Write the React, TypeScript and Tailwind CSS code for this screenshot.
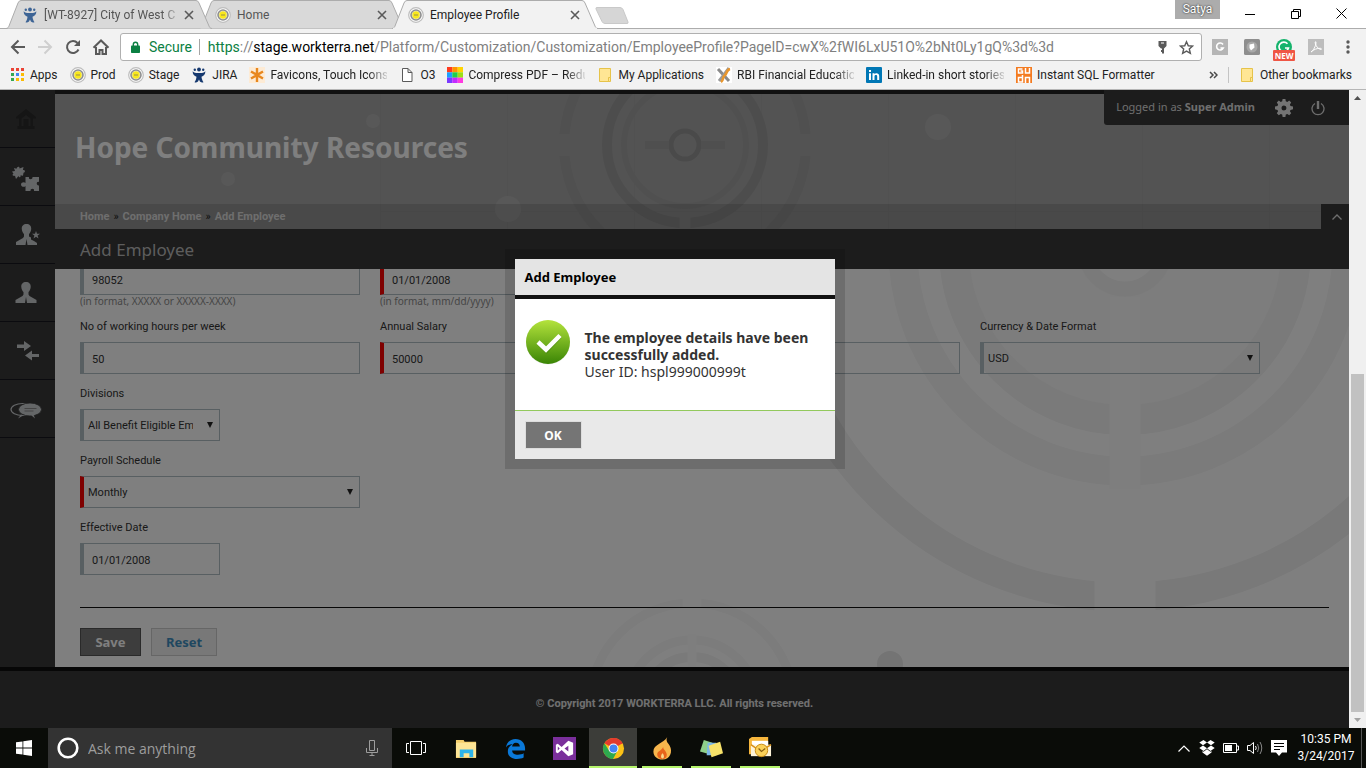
import React from "react";

/* ---------- small drawings ---------- */

function Roundel() {
  return (
    <svg viewBox="0 0 16 16" className="size-4 shrink-0">
      <circle cx="8" cy="8" r="7.3" fill="#fff" stroke="#bdbdbd" strokeWidth="1.200" />
      <circle cx="8" cy="8" r="5" fill="#e9e9e9" stroke="#8f8f8f" strokeWidth="1.600" />
      <circle cx="8" cy="8" r="3.700" fill="#f8e71c" />
      <path d="M6 8h4" stroke="#b3a640" strokeWidth="1.400" />
    </svg>
  );
}

function JiraIcon({ color }: { color: string }) {
  return (
    <svg viewBox="0 0 16 16" className="size-4 shrink-0" fill={color}>
      <circle cx="8" cy="2.500" r="1.900" />
      <circle cx="3.800" cy="2.800" r="1.200" />
      <circle cx="12.200" cy="2.800" r="1.200" />
      <path d="M1.600 4.200C4 6.500 6 6 8 6s4 .5 6.400-1.800C14.300 7.500 12.500 9 10.500 9.800c.2 2 .8 3.800 2 5.400-1.800.4-3 .2-3.600-.6L8 12.500l-1 2.100c-.5.8-1.800 1-3.500.6 1.200-1.400 1.800-3.400 2-5.400C3.500 9 1.700 7.500 1.600 4.200z" />
    </svg>
  );
}

function AppsIcon() {
  const c = ["#ea4335", "#ea4335", "#ea4335", "#34a853", "#4285f4", "#fbbc05", "#34a853", "#fbbc05", "#fbbc05"];
  return (
    <svg viewBox="0 0 16 16" className="size-4 shrink-0">
      {c.map((f, i) => (
        <rect key={i} x={2 + (i % 3) * 5} y={1 + Math.floor(i / 3) * 5} width="3" height="3" fill={f} />
      ))}
    </svg>
  );
}

function StarburstIcon() {
  return (
    <svg viewBox="0 0 16 16" className="size-4 shrink-0">
      <rect width="16" height="16" fill="#fdebd5" />
      <path d="M8 1v14M2 4.500l12 7M14 4.500l-12 7" stroke="#e8871e" strokeWidth="2.400" />
    </svg>
  );
}

function PageIcon() {
  return (
    <svg viewBox="0 0 16 16" className="size-4 shrink-0">
      <path d="M3.500 1.500h5.500l4 4v9h-9.500zM9 1.500v4h4" fill="#fff" stroke="#5a5a5a" />
    </svg>
  );
}

function RainbowIcon() {
  const c = ["#ff3b1f", "#ff9500", "#ffd400", "#19a0ff", "#1fd04a", "#9be015", "#7b3bff", "#c22bff", "#ff3be0"];
  return (
    <svg viewBox="0 0 16 16" className="size-4 shrink-0">
      {c.map((f, i) => (
        <rect key={i} x={(i % 3) * 5.33} y={Math.floor(i / 3) * 5.33} width="5.400" height="5.400" fill={f} />
      ))}
    </svg>
  );
}

function FolderIcon() {
  return (
    <svg viewBox="0 0 16 16" className="size-4 shrink-0">
      <path d="M2.500 1.500h11v11h-1v2h-10z" fill="#ffe694" stroke="#e6c34a" />
      <path d="M11.500 10.500h2v4h-2z" fill="#ffe694" stroke="#e6c34a" />
    </svg>
  );
}

function ToolsIcon() {
  return (
    <svg viewBox="0 0 16 16" className="size-4 shrink-0">
      <rect width="16" height="16" fill="#fff" />
      <path d="M2 2l11 12" stroke="#8a8a8a" strokeWidth="3" />
      <path d="M13 1L7 9l-4 5" stroke="#9a9a9a" strokeWidth="3" />
      <path d="M14 2c-4 1-3 5-5 6-3 2-1 5-4 7" fill="none" stroke="#e8962e" strokeWidth="2.600" />
    </svg>
  );
}

function LinkedInIcon() {
  return (
    <svg viewBox="0 0 16 16" className="size-4 shrink-0">
      <rect width="16" height="16" rx="1" fill="#0077b5" />
      <path d="M3 6.200h2V13H3zM3 3h2v2H3zM6.500 6.200h2v1c1-1.600 4.700-1.700 4.700 1.800v4h-2V9.500c0-2-2.700-1.800-2.700 0V13h-2z" fill="#fff" />
    </svg>
  );
}

function SqlIcon() {
  return (
    <svg viewBox="0 0 16 16" className="size-4 shrink-0" fill="none" stroke="#fff" strokeWidth="1.500">
      <rect width="16" height="16" fill="#f47b20" stroke="none" />
      <path d="M6.500 2h-4v4h4V4h-2M9.500 1v5h4V1M6.500 8v7h-4v-4.500h4M9.500 16v-5.500h4V16" />
    </svg>
  );
}

/* ---------- browser chrome ---------- */

function Tab({ title, icon, active, faded, stack }: { title: string; icon: React.ReactNode; active?: boolean; faded?: boolean; stack: string }) {
  return (
    <div className={`relative flex h-[29px] w-[206px] shrink-0 items-center gap-[6px] pr-[18px] pl-4 ${stack}`}>
      <svg viewBox="0 0 206 29" className="absolute inset-0 size-full" preserveAspectRatio="none">
        <path
          d="M0 28.500C2 28.500 2.500 27 3 26L12 3Q13 .5 15 .5H190Q192 .5 193 3L203 26C203.500 27 204 28.500 206 28.500"
          fill={active ? "#f2f2f2" : "#d9d9d9"}
          stroke="#acacac"
        />
        {active && <path d="M1 28.500H205" stroke="#f2f2f2" strokeWidth="1.500" />}
      </svg>
      <span className="relative">{icon}</span>
      <button
        className={`relative flex-1 text-left whitespace-nowrap ${active ? "text-[#222]" : "text-[#555]"} ${faded ? "[mask-image:linear-gradient(to_right,#000_118px,transparent_138px)]" : ""}`}
      >
        {title}
      </button>
      <button aria-label={`Close ${title}`} className="relative">
        <svg viewBox="0 0 10 10" className="size-[10px]" stroke="#5a5a5a" strokeWidth="1.600">
          <path d="M1 1l8 8M9 1l-8 8" />
        </svg>
      </button>
    </div>
  );
}

function TabStrip() {
  return (
    <div className="flex h-[29px] shrink-0 justify-between border-b border-[#acacac] bg-white pl-[6px] text-[12px]">
      <div className="flex">
        <Tab title="[WT-8927] City of West C" icon={<JiraIcon color="#3d6495" />} faded stack="z-20" />
        <Tab title="Home" icon={<Roundel />} stack="z-10 -ml-[13px]" />
        <Tab title="Employee Profile" icon={<Roundel />} active stack="z-30 -ml-[13px]" />
        <button aria-label="New tab" className="-ml-1 h-[29px] w-9">
          <svg viewBox="0 0 36 29" className="h-[29px] w-9">
            <path d="M3 7.500H26Q28 7.500 29 9.500L34 22Q34.500 23.500 33 23.500H11Q9 23.500 8 21.500L2 9Q1.500 7.500 3 7.500z" fill="#d6d6d6" stroke="#c9c9c9" />
          </svg>
        </button>
      </div>
      <div className="flex">
        <button className="mr-1 h-[19px] w-[45px] bg-[#acacac] text-[12px] leading-[19px] text-white [text-shadow:0_0_2px_#000]">Satya</button>
        <div className="flex h-[27px] items-center">
          <button aria-label="Minimize" className="flex w-[52px] justify-center">
            <svg viewBox="0 0 10 10" className="size-[10px]"><path d="M0 5.500h10" stroke="#000" /></svg>
          </button>
          <button aria-label="Restore" className="flex w-10 justify-center">
            <svg viewBox="0 0 10 10" className="size-[10px]" fill="none" stroke="#000"><path d="M.5 2.500h7v7h-7zM2.500 2.500v-2h7v7h-2" /></svg>
          </button>
          <button aria-label="Close" className="flex w-[50px] justify-center">
            <svg viewBox="0 0 11 11" className="size-[11px]" stroke="#000"><path d="M.5 .5l10 10M10.500 .5l-10 10" /></svg>
          </button>
        </div>
      </div>
    </div>
  );
}

function Toolbar() {
  return (
    <div className="flex h-9 shrink-0 items-center bg-[#f2f2f2] pr-[14px] pl-[10px]">
      <div className="flex w-[110px] items-center justify-between pr-[10px]">
        <button aria-label="Back">
          <svg viewBox="0 0 16 16" className="size-4" fill="none" stroke="#5a5a5a" strokeWidth="2"><path d="M15 8H2.500M8.500 1.500L2 8l6.500 6.500" /></svg>
        </button>
        <button aria-label="Forward">
          <svg viewBox="0 0 16 16" className="size-4" fill="none" stroke="#cfcfcf" strokeWidth="2"><path d="M1 8h12.500M7.500 1.500L14 8l-6.500 6.500" /></svg>
        </button>
        <button aria-label="Reload">
          <svg viewBox="0 0 16 16" className="size-4" fill="none" stroke="#5a5a5a" strokeWidth="2"><path d="M13.500 10.500A6 6 0 1 1 12.500 4" /><path d="M15 1v6H9z" fill="#5a5a5a" stroke="none" /></svg>
        </button>
        <button aria-label="Home page">
          <svg viewBox="0 0 18 16" className="h-4 w-[18px]" fill="none" stroke="#5a5a5a" strokeWidth="2"><path d="M4 8v7h3.500v-4h3v4H14V8M1.500 8.800L9 1.500l7.500 7.300" /></svg>
        </button>
      </div>
      <div className="flex h-7 flex-1 items-center rounded-[3px] border border-[#b0b0b0] bg-white pr-[7px] pl-[10px] text-[14px]">
        <svg viewBox="0 0 9 12" className="h-3 w-[9px] shrink-0"><path d="M2.300 6V3.500a2.200 2.200 0 0 1 4.400 0V6" fill="none" stroke="#0b8043" strokeWidth="1.400" /><rect y="4.500" width="9" height="7.500" rx=".8" fill="#0b8043" /></svg>
        <span className="ml-[9px] text-[#0b8043]">Secure</span>
        <span className="mr-2 ml-[7px] h-4 w-px bg-[#a5a5a5]" />
        <div className="flex-1 whitespace-nowrap text-[#808080]">
          <span className="text-[#0b8043]">https</span>://<span className="text-black">stage.workterra.net</span>/Platform/Customization/Customization/EmployeeProfile?PageID=cwX%2fWI6LxU51O%2bNt0Ly1gQ%3d%3d
        </div>
        <button aria-label="Saved password" className="mr-3">
          <svg viewBox="0 0 9 13" className="h-[13px] w-[9px]" fill="#5a5a5a"><path d="M.5 0h8v5L6 7.500v5H4V11H3V9h1V7.500H3L.5 5zM3 1.500v1h3v-1z" fillRule="evenodd" /></svg>
        </button>
        <button aria-label="Bookmark this page">
          <svg viewBox="0 0 16 16" className="size-[15px]" fill="none" stroke="#5a5a5a" strokeWidth="1.500"><path d="M8 1.800l1.900 4.300 4.600.4-3.500 3.100 1.100 4.600L8 11.800l-4.100 2.400L5 9.600 1.500 6.500l4.600-.4z" /></svg>
        </button>
      </div>
      <div className="flex items-center gap-4 pl-[10px]">
        <svg viewBox="0 0 16 16" className="size-4"><rect width="16" height="16" fill="#b5b5b5" /><path d="M11 5.500A3.500 3.500 0 1 0 11.300 9H8.500" fill="none" stroke="#fff" strokeWidth="1.600" /></svg>
        <svg viewBox="0 0 16 16" className="size-4"><rect width="16" height="16" rx="1.500" fill="#8e8e8e" /><circle cx="8" cy="8" r="5.500" fill="#a8a8a8" /><path d="M5.500 5.500L10 4.500l.5 4L7 11.500 5.500 9z" fill="#fff" /></svg>
        <svg viewBox="0 0 22 23" className="-mx-[3px] mt-1 h-[23px] w-[22px]">
          <circle cx="11" cy="9" r="8" fill="#15b36c" />
          <path d="M14.500 5.800A4.800 4.800 0 1 0 15.500 10H12" fill="none" stroke="#fff" strokeWidth="1.600" />
          <rect y="12" width="22" height="11" rx="1" fill="#ef5645" />
          <text x="11" y="20.500" fontSize="8" fontWeight="700" fill="#fff" textAnchor="middle" fontFamily="Open Sans">NEW</text>
        </svg>
        <svg viewBox="0 0 16 16" className="size-4"><rect width="16" height="16" fill="#bdbdbd" /><path d="M3 13c2-1 5-6 5-9.500 0-1.500-1-1-.8.5C7.800 7 10 10 13 10.500c1 0 .5-1.300-1-1.200-3 0-6 1-9 3.700z" fill="none" stroke="#fff" /></svg>
        <button aria-label="Browser menu">
          <svg viewBox="0 0 12 14" className="h-[14px] w-3" fill="#5a5a5a"><circle cx="8" cy="2" r="1.700" /><circle cx="8" cy="7" r="1.700" /><circle cx="8" cy="12" r="1.700" /></svg>
        </button>
      </div>
    </div>
  );
}

const bookmarks: { label: string; icon: React.ReactNode; faded?: boolean }[] = [
  { label: "Apps", icon: <AppsIcon /> },
  { label: "Prod", icon: <Roundel /> },
  { label: "Stage", icon: <Roundel /> },
  { label: "JIRA", icon: <JiraIcon color="#16396f" /> },
  { label: "Favicons, Touch Icons,", icon: <StarburstIcon />, faded: true },
  { label: "O3", icon: <PageIcon /> },
  { label: "Compress PDF – Redu", icon: <RainbowIcon />, faded: true },
  { label: "My Applications", icon: <FolderIcon /> },
  { label: "RBI Financial Educatio", icon: <ToolsIcon />, faded: true },
  { label: "Linked-in short stories", icon: <LinkedInIcon />, faded: true },
  { label: "Instant SQL Formatter", icon: <SqlIcon /> },
];

function BookmarksBar() {
  return (
    <nav aria-label="Bookmarks" className="flex h-[25px] shrink-0 items-center justify-between border-b border-[#b6b6b6] bg-[#f2f2f2] pr-[14px] pb-1 pl-[9px] text-[12px] text-[#222]">
      <div className="flex gap-3">
        {bookmarks.map((b) => (
          <a key={b.label} href="#" className="flex items-center gap-[5px] whitespace-nowrap">
            {b.icon}
            <span className={b.faded ? "w-[117px] [mask-image:linear-gradient(to_right,#000_98px,transparent_120px)]" : ""}>{b.label}</span>
          </a>
        ))}
      </div>
      <div className="flex items-center">
        <button aria-label="More bookmarks">
          <svg viewBox="0 0 9 8" className="h-2 w-[9px]" fill="none" stroke="#4a4a4a" strokeWidth="1.500"><path d="M1 1l3 3-3 3M5 1l3 3-3 3" /></svg>
        </button>
        <span className="mr-[10px] ml-[10px] h-4 w-px bg-[#c4c4c4]" />
        <a href="#" className="flex items-center gap-[5px]"><FolderIcon />Other bookmarks</a>
      </div>
    </nav>
  );
}

/* ---------- application page ---------- */

function SideNav() {
  const cell = "flex h-[58px] items-center justify-center border-b border-[#16161f]";
  return (
    <nav aria-label="Main" className="flex w-[55px] shrink-0 flex-col bg-[#393939]">
      <a href="#" aria-label="Home" className={cell}>
        <svg viewBox="0 0 20 20" className="mr-1 size-5 text-[#2a2a2a]" fill="currentColor"><path d="M10 0l10 8v1.500h-3V17h1.500v3h-17v-3H3V9.500H0V8zM5.500 9.500V17h9V9.500L10 6zM7.500 10h5v7h-5z" fillRule="evenodd" /></svg>
      </a>
      <a href="#" aria-label="Benefits" className={cell}>
        <svg viewBox="0 0 28 26" className="mt-1 mr-1 h-[26px] w-7 text-[#c9cccf]" fill="currentColor">
          <path d="M2 2l2.500.8C5 .5 7.800 0 7.500 2.500L11.500 1l-.6 3.200c2.400-.8 2.700 2.400.6 2.500l-.5 3-2.500-.4c.6 2-1.800 2.500-2 .8L4 13l-1-3.200C1 10.500-.5 8.500 1.500 7.800L0 5.500l3-.5z" />
          <path d="M13.500 11H17c-1 3 4 3 3.500 0H27v5c-3-1-3 4 0 3.500V25h-5c1-3-4-3-3.500 0h-5v-5c-1 1.500-4.500 1-4.500-1.500s3.500-3 4.500-1.500z" />
        </svg>
      </a>
      <a href="#" aria-label="Administrators" className={cell}>
        <svg viewBox="0 0 24 22" className="h-[22px] w-6 text-[#c9cccf]" fill="currentColor">
          <path d="M10.500 0c3 0 5 2 4.700 5-.2 2.500-1.200 4-2.200 5v2.500l2 1v2l3 1.500 3 2V21H0v-3l7-4 1-1.500V10C7 9 6 7.500 5.800 5 5.500 2 7.500 0 10.500 0z" />
          <path d="M20 7l1 2.800h3l-2.400 1.800.9 3L20 12.800l-2.500 1.800.9-3L16 9.800h3z" />
          <path d="M9.500 21l1-6 1 6z" fill="#393939" />
        </svg>
      </a>
      <a href="#" aria-label="Employees" className={cell}>
        <svg viewBox="0 0 22 22" className="mr-1 h-[22px] w-[22px] text-[#c9cccf]" fill="currentColor">
          <path d="M11 0c3 0 5 2 4.700 5-.2 2.500-1.200 4-2.200 5v2.500l1 1.500 7 4v3H.500v-3l7-4 1-1.500V10C7.500 9 6.500 7.500 6.300 5 6 2 8 0 11 0z" />
          <path d="M10 21l1-6 1 6z" fill="#393939" />
        </svg>
      </a>
      <a href="#" aria-label="Transfers" className={cell}>
        <svg viewBox="0 0 24 20" className="h-5 w-6 text-[#c9cccf]" fill="currentColor">
          <path d="M1 3.500h7V0l7 5-7 5V7H1zM23 13h-7V9.500l-7 5 7 5V16h7z" />
        </svg>
      </a>
      <a href="#" aria-label="Messages" className={cell}>
        <svg viewBox="0 0 32 18" className="mt-1 mr-1 h-[18px] w-8 text-[#c9cccf]" fill="currentColor">
          <ellipse cx="12.500" cy="7.500" rx="11.500" ry="6" fill="none" stroke="currentColor" strokeWidth="1.200" />
          <path d="M11 12.500L8 16.500l6-3.500z" />
          <ellipse cx="20" cy="7.500" rx="11.500" ry="6.500" stroke="#393939" strokeWidth=".8" />
          <path d="M21 13l4 3.500-1.500-4z" />
          <path d="M14.500 6.500h12M14.500 9h9" stroke="#8a8a8a" strokeWidth="1" />
        </svg>
      </a>
    </nav>
  );
}

function HeaderArt() {
  return (
    <svg viewBox="0 0 1294 135" preserveAspectRatio="xMinYMin slice" className="absolute inset-0 h-full w-full" fill="none">
      {[325, 452, 579, 706, 833, 960, 1087, 1214].map((x) => (
        <path key={x} d={`M${x}.5 0V135`} stroke="#a2a2a2" />
      ))}
      <path d="M325 117.500H1294" stroke="#a2a2a2" />
      <g stroke="#9e9e9e">
        <circle cx="630" cy="51" r="121" strokeWidth="10" stroke="#a0a0a0" />
        <circle cx="630" cy="51" r="78" strokeWidth="10" stroke="#9b9b9b" />
        <circle cx="630" cy="51" r="61" strokeWidth="6" stroke="#a1a1a1" />
        <circle cx="630" cy="51" r="14" strokeWidth="5" stroke="#949494" />
        <path d="M590 51h24M646 51h24" strokeWidth="8" />
      </g>
      <path d="M501 51h16M743 51h16" stroke="#a7a7a7" strokeWidth="22" />
      <path d="M630 120v15" stroke="#a7a7a7" strokeWidth="11" />
      <g fill="#b1b1b1">
        <circle cx="318" cy="27" r="7" />
        <circle cx="173" cy="85" r="7" />
        <circle cx="453" cy="115" r="13" />
        <circle cx="883" cy="33" r="13" />
      </g>
    </svg>
  );
}

function FormArt() {
  return (
    <svg viewBox="0 0 1294 398" preserveAspectRatio="xMaxYMax slice" className="absolute inset-0 h-full w-full" fill="none">
      <circle cx="1070" cy="-20" r="156" fill="#fafafa" />
      <circle cx="1070" cy="-20" r="33" fill="#fff" />
      <circle cx="1070" cy="-20" r="40" stroke="#f5f5f5" strokeWidth="15" />
      <circle cx="1070" cy="-20" r="171" stroke="#f4f4f4" strokeWidth="30" />
      <circle cx="1070" cy="-20" r="222" stroke="#f6f6f6" strokeWidth="29" />
      <circle cx="1070" cy="-20" r="348" stroke="#f2f2f2" strokeWidth="29" />
      <path d="M1070 28V220" stroke="#fcfcfc" strokeWidth="31" />
      <path d="M1070 310v40" stroke="#fff" strokeWidth="61" />
      <g stroke="#f8f8f8">
        <circle cx="637" cy="436" r="102" strokeWidth="9" />
        <circle cx="637" cy="436" r="65" strokeWidth="9" />
        <circle cx="637" cy="436" r="48" strokeWidth="10" stroke="#f5f5f5" />
      </g>
      <path d="M637 325v24" stroke="#fff" strokeWidth="19" />
      <path d="M637 365v34" stroke="#fcfcfc" strokeWidth="9" />
      <circle cx="835" cy="395" r="13" fill="#e8e8e8" />
    </svg>
  );
}

const box = "h-8 border border-l-4 border-[#b0bec4] bg-transparent text-[11px] text-[#333]";
const labelText = "mb-2 h-4 leading-[18px]";

function TextField({ id, label, value, hint, required, narrow }: { id: string; label?: string; value: string; hint?: string; required?: boolean; narrow?: boolean }) {
  return (
    <div className="flex flex-col">
      {label ? <label htmlFor={id} className={labelText}>{label}</label> : <span className="mb-2 h-4" />}
      <input id={id} aria-label={label ? undefined : id} defaultValue={value} className={`${box} px-2 pt-[2px] ${required ? "border-l-[#f00]" : ""} ${narrow ? "w-[140px]" : "w-full"}`} />
      {hint && <span className="h-3 font-['Noto_Sans',sans-serif] text-[10px] leading-[12px] text-[#8c8c8c]">{hint}</span>}
    </div>
  );
}

function SelectField({ id, label, value, required, narrow }: { id: string; label: string; value: string; required?: boolean; narrow?: boolean }) {
  return (
    <div className="flex flex-col">
      <label htmlFor={id} className={labelText}>{label}</label>
      <div className={`relative ${narrow ? "w-[140px]" : "w-full"}`}>
        <select id={id} className={`${box} w-full appearance-none pt-[2px] pr-[26px] pl-1 ${required ? "border-l-[#f00]" : ""}`}>
          <option>{value}</option>
        </select>
        <svg viewBox="0 0 6 6" className="pointer-events-none absolute top-[13px] right-[7px] size-[6px]" fill="#222"><path d="M0 0h6L3 6z" /></svg>
      </div>
    </div>
  );
}

function EmployeeForm() {
  const row = "grid grid-cols-[repeat(4,280px)] gap-x-5";
  return (
    <form className="relative flex min-h-0 flex-1 flex-col justify-end overflow-hidden bg-white pr-5 pb-[11px] pl-[25px] text-[11px] text-[#333]">
      <FormArt />
      <div className="relative flex flex-col gap-[11px]">
        <div className={row}>
          <TextField id="Zip" value="98052" hint="(in format, XXXXX or XXXXX-XXXX)" />
          <TextField id="Hire Date" value="01/01/2008" hint="(in format, mm/dd/yyyy)" required />
        </div>
        <div className={row}>
          <TextField id="hours" label="No of working hours per week" value="50" />
          <TextField id="salary" label="Annual Salary" value="50000" required />
          <TextField id="Other" value="" />
          <SelectField id="currency" label="Currency & Date Format" value="USD" />
        </div>
        <div className={row}><SelectField id="divisions" label="Divisions" value="All Benefit Eligible Employees" narrow /></div>
        <div className={row}><SelectField id="payroll" label="Payroll Schedule" value="Monthly" required /></div>
        <div className={row}><TextField id="effective" label="Effective Date" value="01/01/2008" narrow /></div>
      </div>
      <hr className="relative mt-8 border-[#111]" />
      <div className="relative mt-5 flex gap-[10px] font-['Noto_Sans',sans-serif] text-[13px] font-bold">
        <button type="button" className="h-7 w-[61px] border border-[#555] bg-[#7a7a7a] pt-px text-white">Save</button>
        <button type="button" className="h-7 w-[66px] border border-[#ccc] bg-[#f0f0f0] pt-px text-[#3f8fc0]">Reset</button>
      </div>
    </form>
  );
}

function SuccessDialog() {
  return (
    <div className="absolute inset-0 flex items-start justify-center bg-black/50 pt-[159px] font-['Noto_Sans',sans-serif]">
      <div role="dialog" aria-labelledby="dialog-title" className="bg-black/14 p-[10px]">
        <div className="w-80 bg-white text-[#333]">
          <h2 id="dialog-title" className="h-10 border-b-4 border-[#111] bg-[#e4e4e4] pl-[10px] text-[13px] leading-[36px] font-bold text-black">Add Employee</h2>
          <div className="flex h-28 gap-[15px] border-b border-[#93c95d] pt-5 pl-[10px]">
            <svg viewBox="0 0 45 46" className="h-[46px] w-[45px] shrink-0">
              <defs>
                <linearGradient id="ok-green" x1="0" y1="0" x2="0" y2="1"><stop offset="0" stopColor="#b4e33c" /><stop offset="1" stopColor="#3a8505" /></linearGradient>
              </defs>
              <circle cx="23" cy="23.500" r="22" fill="#000" opacity=".08" />
              <circle cx="23" cy="23" r="22" fill="url(#ok-green)" />
              <path d="M13.500 24l8 7.500L35 17.500" fill="none" stroke="#3a7a10" strokeOpacity=".4" strokeWidth="4.500" />
              <path d="M13 23l8 7.500L35 16.500" fill="none" stroke="#fff" strokeWidth="4.500" />
            </svg>
            <p className="pt-[10px] text-[14px] leading-[17px]"><strong>The employee details have been<br />successfully added.</strong><br />User ID: hspl999000999t</p>
          </div>
          <div className="h-12 bg-[#e9e9e9] pt-[10px] pl-[10px]">
            <button className="h-7 w-[57px] border border-[#ddd] bg-[#757575] pt-px text-[12px] font-bold text-white">OK</button>
          </div>
        </div>
      </div>
    </div>
  );
}

function AppPage() {
  return (
    <div className="flex min-h-0 flex-1 bg-[#f0f0f0]">
      <div className="relative flex min-w-0 flex-1 flex-col overflow-hidden">
        <div className="flex min-h-0 flex-1">
          <SideNav />
          <div className="flex min-w-0 flex-1 flex-col">
            <header className="relative border-t-4 border-[#222] bg-[#a7a7a7]">
              <HeaderArt />
              <div className="relative flex h-[110px] items-center pb-1 pl-5">
                <h1 className="font-['Noto_Sans',sans-serif] text-[28px] font-bold text-white">Hope Community Resources</h1>
                <div className="absolute -top-1 right-0 flex h-[35px] items-center rounded-bl-[3px] bg-[#393939] pr-6 pl-3 font-['Noto_Sans',sans-serif] text-[11px] text-[#ddd]">
                  <span>Logged in as <b>Super Admin</b></span>
                  <button aria-label="Settings" className="ml-5">
                    <svg viewBox="0 0 18 18" className="size-[18px]" fill="#e8e8e8"><path fillRule="evenodd" d="M7.600 0h2.800l.4 2.300 1.500.6L14.200 1.500l2 2-1.300 2 .6 1.400 2.500.6v2.800l-2.500.6-.6 1.400 1.300 2-2 2-1.900-1.300-1.500.6-.4 2.400H7.600l-.4-2.400-1.500-.6-1.900 1.300-2-2 1.300-2-.6-1.400L0 10.300V7.500l2.500-.6.600-1.400-1.300-2 2-2 1.900 1.400 1.500-.6zM9 6.500a2.500 2.500 0 1 0 0 5 2.500 2.500 0 0 0 0-5z" /></svg>
                  </button>
                  <button aria-label="Log out" className="ml-[18px]">
                    <svg viewBox="0 0 14 16" className="h-4 w-[14px]" fill="none" stroke="#ddd"><path d="M4 3.500a6 6 0 1 0 6 0" strokeWidth="1.300" /><path d="M7 1v8" strokeWidth="2.400" /></svg>
                  </button>
                </div>
              </div>
              <div className="relative flex h-[25px] items-center justify-between bg-black/12 pl-[25px]">
                <nav aria-label="Breadcrumb" className="flex gap-1 pt-[2px] text-[11px] font-bold text-[#ddd]">
                  <a href="#">Home</a><span className="font-normal text-[#222]">»</span><a href="#">Company Home</a><span className="font-normal text-[#222]">»</span><a href="#">Add Employee</a>
                </nav>
                <button aria-label="Collapse header" className="flex h-[25px] w-7 items-center justify-center bg-[#393939]">
                  <svg viewBox="0 0 10 6" className="ml-1 h-[6px] w-[10px]" fill="none" stroke="#ddd" strokeWidth="1.300"><path d="M.5 5.500L5 1l4.500 4.500" /></svg>
                </button>
              </div>
            </header>
            <h2 className="h-10 shrink-0 bg-[#393939] pl-[25px] font-['Noto_Sans',sans-serif] text-[17px] leading-[42px] text-[#bbb]">Add Employee</h2>
            <EmployeeForm />
          </div>
        </div>
        <footer className="h-[61px] shrink-0 border-t-4 border-[#0e0e0e] bg-[#393939] text-center text-[11px] leading-[66px] font-bold text-[#e0e0e0]">
          © Copyright 2017 WORKTERRA LLC. All rights reserved.
        </footer>
        <SuccessDialog />
      </div>
      <div aria-hidden="true" className="flex w-[17px] shrink-0 flex-col items-center justify-between py-[6px]">
        <svg viewBox="0 0 7 4" className="h-1 w-[7px]" fill="#505050"><path d="M0 4l3.500-4L7 4z" /></svg>
        <div className="mt-auto mb-[6px] h-[54%] w-[13px] bg-[#c1c1c1]" />
        <svg viewBox="0 0 7 4" className="h-1 w-[7px]" fill="#a3a3a3"><path d="M0 0l3.500 4L7 0z" /></svg>
      </div>
    </div>
  );
}

/* ---------- desktop taskbar ---------- */

const taskApps: { name: string; open?: boolean; current?: boolean; icon: React.ReactNode }[] = [
  { name: "File Explorer", icon: <><path d="M1 3h8l1 2h12v17H1z" fill="#f5cf6b" /><path d="M1 6h21v15H1z" fill="#fde595" /><path d="M5 21v-8h14v8h-4v-4H9v4z" fill="#2db4ea" /></> },
  { name: "Edge", icon: <path d="M2 11C3 5 7 2 12 2c6 0 10 4 10 10v2H8.500c0 3 3 4.500 6 4.500 2.500 0 4.500-.5 6-1.500v4.500c-2 1-4 1.500-7 1.500-6 0-9.500-3.500-9.500-8C4 11.500 6 9 9 7.500 6 7.500 3.500 8.500 2 11zm6.500-1h8c0-2.500-1.500-4-4-4s-4 2-4 4z" fill="#0a78d7" /> },
  { name: "Visual Studio", icon: <><path d="M0 0h24v24H0z" fill="#7a2f9b" /><path d="M3 8l2-1 4 3.500L16 4l5 2v12l-5 2-7-6.500L5 17l-2-1zm2 2v4l2-2zm11-1l-4 3 4 3z" fill="#fff" fillRule="evenodd" /></> },
  { name: "Chrome", open: true, current: true, icon: <><circle cx="12" cy="12" r="11" fill="#fbc116" /><path d="M12 12L2.500 6.500A11 11 0 0 1 21.500 6.500z" fill="#e33b2e" /><path d="M12 1a11 11 0 0 1 9.500 6H12z" fill="#e33b2e" /><path d="M2.500 6.500A11 11 0 0 0 11.500 23L16 14.500 7.300 14z" fill="#2da94f" /><circle cx="12" cy="12" r="5.200" fill="#fff" /><circle cx="12" cy="12" r="4.200" fill="#4684f3" /></> },
  { name: "Download manager", open: true, icon: <><path d="M17 0c-2 4 .5 6 2.500 9 3.500 6 .5 14.500-7.500 14.500-5.500 0-9.500-3.500-9.500-8.500C2.500 7.500 13 7 17 0z" fill="#f7b64c" /><path d="M13 9c-1.500 4 3.500 5 3.500 9.500 0 3-2 4.500-4.500 4.500s-5.500-1.500-5.500-5c0-4 6-4 6.500-9z" fill="#e8641b" /><path d="M12 17c2 2 2 5 0 5.500-2-.5-2-3.500 0-5.500z" fill="#fbd88a" /></> },
  { name: "Sticky notes", open: true, icon: <><path d="M4 3l9 3-3 12-10-3z" fill="#8fd08a" /><path d="M8 6h9v13H7z" fill="#7cb8e8" /><path d="M9 9l12-4 3 12-12 4z" fill="#f8e36a" /></> },
  { name: "Outlook", open: true, icon: <><path d="M0 2l3-2h17v18H0z" fill="#f6b63c" /><path d="M3 4h17v5H3z" fill="#fff" /><path d="M2 8h21v12H2z" fill="#fdf3d8" /><path d="M2 8l10 7 11-7" fill="none" stroke="#d89018" strokeWidth="1.500" /><circle cx="13" cy="14" r="6.500" fill="#fbd158" stroke="#c98a10" /><path d="M10 12l3 3 4-3" fill="none" stroke="#8a6010" strokeWidth="1.300" /></> },
];

function Taskbar() {
  return (
    <div className="flex h-10 shrink-0 justify-between bg-[#0a0c08] text-white">
      <div className="flex">
        <button aria-label="Start" className="flex w-12 items-center justify-center">
          <svg viewBox="0 0 16 16" className="size-4" fill="#fff"><path d="M0 2.300L6.500 1.400v6.200H0zM7.300 1.200L16 0v7.600H7.300zM0 8.400h6.500v6.200L0 13.700zM7.300 8.400H16V16l-8.700-1.200z" /></svg>
        </button>
        <div className="flex w-[344px] items-center gap-[9px] bg-[#333] pr-[14px] pl-[9px]">
          <svg viewBox="0 0 22 22" className="size-[22px]" fill="none" stroke="#fff" strokeWidth="2.600"><circle cx="11" cy="11" r="9.300" /></svg>
          <input aria-label="Search Windows" placeholder="Ask me anything" className="min-w-0 flex-1 bg-transparent font-['Open_Sans',sans-serif] text-[14px] placeholder:text-[#9d9d9d]" />
          <svg viewBox="0 0 12 16" className="h-4 w-3" fill="none" stroke="#9d9d9d"><path d="M3.500.5h5v10h-5zM.5 8v4.500h11V8M6 12.500v3M3.500 15.500h5" /></svg>
        </div>
        <button aria-label="Task view" className="flex w-12 items-center justify-center">
          <svg viewBox="0 0 20 14" className="h-[14px] w-5" fill="none" stroke="#fff"><path d="M4.500.5h11v13h-11zM3 2.500H.5v9H3M17 2.500h2.500v9H17" /></svg>
        </button>
        <div className="flex gap-px pl-[2px]">
          {taskApps.map((a) => (
            <button key={a.name} aria-label={a.name} className={`relative flex w-12 items-center justify-center ${a.current ? "bg-[#3c3d39]" : ""}`}>
              <svg viewBox="0 0 24 24" className="size-[23px]">{a.icon}</svg>
              {a.open && <span className={`absolute bottom-0 h-[2px] bg-[#b5f56c] ${a.current ? "inset-x-0" : "inset-x-1"}`} />}
            </button>
          ))}
        </div>
      </div>
      <div className="flex items-center pr-1">
        <div className="flex items-center gap-2">
          <svg viewBox="0 0 12 7" className="mr-px h-[7px] w-3" fill="none" stroke="#fff" strokeWidth="1.200"><path d="M.5 6.500L6 1l5.500 5.500" /></svg>
          <svg viewBox="0 0 16 16" className="size-4" fill="#fff"><path d="M4.500 0L8 2.500 4 5.200.3 2.600zM11.500 0L8 2.500l4 2.700 3.700-2.600zM4 5.600L8 8.200 4.500 11 .3 8zM12 5.600L8 8.200l3.500 2.800L15.700 8zM8 9.200l3.500 2.600 1-.7v1.400L8 15.800l-4.500-3.300v-1.400l1 .7z" /></svg>
          <svg viewBox="0 0 16 10" className="h-[10px] w-4" fill="none" stroke="#fff"><path d="M.5 .5h13v9H.5zM14 3h1.500v4H14" /><path d="M2 2h7v6H2z" fill="#fff" stroke="none" /></svg>
          <svg viewBox="0 0 16 14" className="h-[14px] w-4" fill="none" stroke="#fff"><path d="M.5 4.500H3L6.500 1.500v11L3 9.500H.5zM8.500 5Q10 7 8.500 9" /><path d="M10.500 3Q13 7 10.500 11M13 1Q16.500 7 13 13" stroke="#888" /></svg>
          <svg viewBox="0 0 16 16" className="size-4"><path d="M0 0h16v12.500h-5L8 16l-3-3.500H0z" fill="#fff" /><path d="M3 3.500h10M3 6.500h10M3 9.500h6" stroke="#000" /></svg>
        </div>
        <div className="flex w-[78px] flex-col items-center text-[12px] leading-[17px]"><span>10:35 PM</span><span>3/24/2017</span></div>
        <span className="-ml-[4px] h-10 w-px bg-[#555]" />
      </div>
    </div>
  );
}

export default function App() {
  return (
    <div className="flex h-screen flex-col overflow-hidden font-['Roboto',sans-serif]">
      <TabStrip />
      <Toolbar />
      <BookmarksBar />
      <AppPage />
      <Taskbar />
    </div>
  );
}
